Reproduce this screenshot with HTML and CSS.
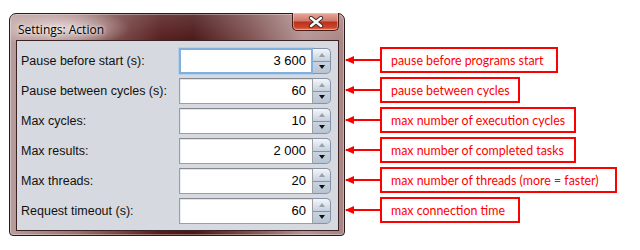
FILE: index.html
```html
<!DOCTYPE html>
<html lang="en">
<head>
  <meta charset="UTF-8" />
  <title>Settings: Action</title>
  <link rel="stylesheet" href="styles.css">
</head>
<body>

  <div class="scene">

    <div class="window">
      <div class="titlebar">
        <span class="title">Settings: Action</span>
        <span class="close-button">
          <svg width="16" height="12" viewBox="0 0 16 12">
            <path d="M3 2 L13 10 M13 2 L3 10" stroke="#3a2a2a" stroke-width="4.2" stroke-linecap="round" />
            <path d="M3 2 L13 10 M13 2 L3 10" stroke="#fff" stroke-width="2.4" stroke-linecap="round" />
          </svg>
        </span>
      </div>

      <div class="panel">
        <div class="row">
          <span class="label">Pause before start (s):</span>
          <div class="field focused">3 600</div>
          <div class="spin"><span class="spin-up"></span><span class="spin-down"></span></div>
        </div>
        <div class="row">
          <span class="label">Pause between cycles (s):</span>
          <div class="field">60</div>
          <div class="spin"><span class="spin-up"></span><span class="spin-down"></span></div>
        </div>
        <div class="row">
          <span class="label">Max cycles:</span>
          <div class="field">10</div>
          <div class="spin"><span class="spin-up"></span><span class="spin-down"></span></div>
        </div>
        <div class="row">
          <span class="label">Max results:</span>
          <div class="field">2 000</div>
          <div class="spin"><span class="spin-up"></span><span class="spin-down"></span></div>
        </div>
        <div class="row">
          <span class="label">Max threads:</span>
          <div class="field">20</div>
          <div class="spin"><span class="spin-up"></span><span class="spin-down"></span></div>
        </div>
        <div class="row">
          <span class="label">Request timeout (s):</span>
          <div class="field">60</div>
          <div class="spin"><span class="spin-up"></span><span class="spin-down"></span></div>
        </div>
      </div>
    </div>

    <div class="notes">
      <div class="note"><span class="arrow"></span><span class="note-box w-m">pause before programs start</span></div>
      <div class="note"><span class="arrow"></span><span class="note-box w-s">pause between cycles</span></div>
      <div class="note"><span class="arrow"></span><span class="note-box w-l">max number of execution cycles</span></div>
      <div class="note"><span class="arrow"></span><span class="note-box w-l">max number of completed tasks</span></div>
      <div class="note"><span class="arrow"></span><span class="note-box w-xl">max number of threads (more = faster)</span></div>
      <div class="note"><span class="arrow"></span><span class="note-box w-s">max connection time</span></div>
    </div>

  </div>

</body>
</html>
```

FILE: styles.css
```css
body {
  margin: 0;
  padding: 0;
  background: #fff;
  font-family: 'Liberation Sans', Arial, sans-serif;
}

.scene {
  display: flex;
  align-items: flex-start;
  padding: 13px 0 0 9px;
}

/* window frame */

.window {
  width: 336px;
  height: 223px;
  box-sizing: border-box;
  border: 1px solid #2b1a1a;
  border-radius: 7px 7px 4px 4px;
  background:
    radial-gradient(ellipse 70px 20px at 50px 14px, rgba(235, 220, 220, 0.9), rgba(235, 220, 220, 0) 100%),
    linear-gradient(to bottom, rgba(255, 255, 255, 0.15), rgba(255, 255, 255, 0) 30px),
    linear-gradient(to right, #b89c9c 0%, #9a7070 20%, #561c1c 45%, #4a1616 55%, #7e5050 72%, #b49494 88%, #a88484 100%);
  padding: 0 5px 4px 6px;
  display: flex;
  flex-direction: column;
  box-shadow: inset 0 0 0 1px rgba(255, 255, 255, 0.35);
}

.titlebar {
  height: 27px;
  display: flex;
  align-items: flex-start;
  justify-content: space-between;
}

.title {
  font-family: 'Open Sans', 'Noto Sans', sans-serif;
  font-size: 12px;
  color: #000;
  margin: 7px 0 0 2px;
  text-shadow: 0 0 6px rgba(255, 255, 255, 0.9), 0 0 3px rgba(255, 255, 255, 0.8);
}

.close-button {
  width: 47px;
  height: 18px;
  margin-top: -1px;
  box-sizing: border-box;
  border: 1px solid #4a1a14;
  border-top: none;
  border-radius: 0 0 5px 5px;
  background: linear-gradient(to bottom, #e6a89c 0%, #d27a6a 45%, #b8331e 55%, #d0452a 85%, #e27a5c 100%);
  box-shadow: inset 0 0 0 1px rgba(255, 220, 210, 0.45);
  display: flex;
  align-items: center;
  justify-content: center;
}

.close-button svg {
  display: block;
}

/* client area */

.panel {
  flex: 1;
  background: #d6d9df;
  border: 1px solid #3c2222;
  padding: 7px 7px 6px 4px;
  display: flex;
  flex-direction: column;
  gap: 4px;
}

.row {
  display: flex;
  align-items: center;
  height: 26px;
}

.label {
  width: 158px;
  font-size: 12.5px;
  color: #111;
}

.field {
  width: 134px;
  height: 26px;
  box-sizing: border-box;
  background: #fff;
  border: 1px solid #9b9ea3;
  border-top-color: #868a90;
  box-shadow: inset 0 1px 0 #e2e4e8, inset 1px 0 0 #eceef1;
  text-align: right;
  padding: 0 6px;
  font-size: 13px;
  line-height: 24px;
  color: #000;
}

.field.focused {
  border: 2px solid #82b0dd;
  box-shadow: 0 0 0 1px #b7d0ea;
  line-height: 22px;
  padding-right: 5px;
}

.spin {
  width: 18px;
  height: 26px;
  display: flex;
  flex-direction: column;
}

.spin span {
  flex: 1;
  box-sizing: border-box;
  border: 1px solid #8593a8;
  border-left: none;
  background: linear-gradient(to bottom, #f4f6f9 0%, #dde3ec 50%, #c5cfdc 100%);
  display: flex;
  align-items: center;
  justify-content: center;
}

.spin-up {
  border-radius: 0 5px 0 0;
  border-bottom: none !important;
}

.spin-down {
  border-radius: 0 0 5px 0;
  background: linear-gradient(to bottom, #c9d3df 0%, #b8c4d3 100%) !important;
}

.spin-up::after,
.spin-down::after {
  content: '';
  width: 0;
  height: 0;
  border-left: 3px solid transparent;
  border-right: 3px solid transparent;
}

.spin-up::after {
  border-bottom: 4px solid #98a0aa;
}

.spin-down::after {
  border-top: 4px solid #111;
}

/* annotations */

.notes {
  display: flex;
  flex-direction: column;
  gap: 4px;
  padding: 34px 0 0 1px;
}

.note {
  display: flex;
  align-items: center;
  height: 26px;
}

.arrow {
  position: relative;
  width: 34px;
  height: 2px;
  background: #f00;
}

.arrow::before {
  content: '';
  position: absolute;
  left: -1px;
  top: -3px;
  border-top: 4px solid transparent;
  border-bottom: 4px solid transparent;
  border-right: 9px solid #f00;
}

.note-box {
  height: 26px;
  box-sizing: border-box;
  border: 2px solid #f00;
  padding: 0 0 0 9px;
  font-family: Lato, 'Noto Sans', sans-serif;
  font-size: 12.4px;
  line-height: 23px;
  color: #f00;
}

.w-s { width: 140px; }
.w-m { width: 178px; }
.w-l { width: 196px; }
.w-xl { width: 237px; }
```
